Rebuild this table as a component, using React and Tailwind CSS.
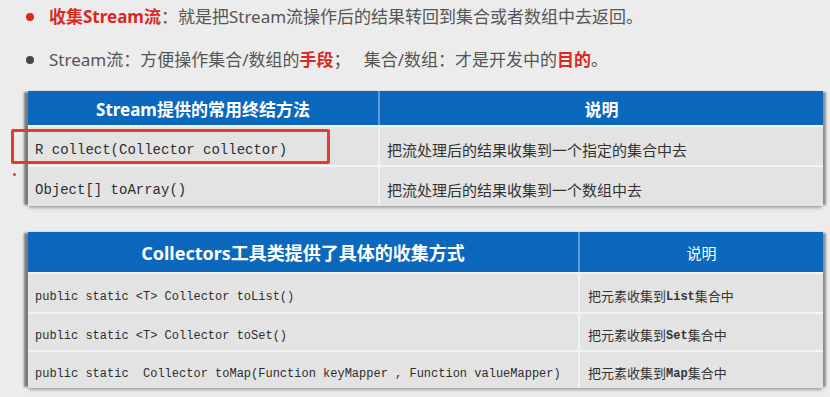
import React from 'react';

const sans = { fontFamily: '"Noto Sans", "Noto Sans CJK SC", sans-serif' };
const mono = { fontFamily: '"Liberation Mono", "Noto Sans CJK SC", monospace' };

const terminalMethods = [
  { sig: 'R collect(Collector collector)', desc: '把流处理后的结果收集到一个指定的集合中去', h: 'h-[40px]' },
  { sig: 'Object[] toArray()', desc: '把流处理后的结果收集到一个数组中去', h: 'h-[41px]' },
];

const collectors = [
  { sig: 'public static <T> Collector toList()', pre: '把元素收集到', kw: 'List', post: '集合中', h: 'h-[40px]' },
  { sig: 'public static <T> Collector toSet()', pre: '把元素收集到', kw: 'Set', post: '集合中', h: 'h-[38px]' },
  { sig: 'public static  Collector toMap(Function keyMapper , Function valueMapper)', pre: '把元素收集到', kw: 'Map', post: '集合中', h: 'h-[38px]' },
];

function Bullet({ color, children }) {
  return (
    <div className="flex items-center h-[34px]">
      <span className={`ml-[26px] w-[8px] h-[8px] rounded-full ${color}`} />
      <span className="ml-[15px] text-[17px] text-[#555]" style={sans}>{children}</span>
    </div>
  );
}

export default function App() {
  return (
    <div className="w-[830px] h-[397px] bg-[#ececec] overflow-hidden relative" style={sans}>
      <Bullet color="bg-[#d8281f]">
        <span className="font-bold text-[#d8281f]">收集Stream流</span>：就是把Stream流操作后的结果转回到集合或者数组中去返回。
      </Bullet>
      <div className="mt-[9px]">
        <Bullet color="bg-[#454545]">
          Stream流：方便操作集合/数组的<span className="font-bold text-[#d8281f]">手段</span>；&nbsp;&nbsp; 集合/数组：才是开发中的<span className="font-bold text-[#d8281f]">目的</span>。
        </Bullet>
      </div>

      {/* table 1 */}
      <div className="relative mt-[14px] ml-[28px] w-[795px] shadow-[-5px_0_2px_-1px_#7a7a7a,4px_0_2px_-1px_#8e8e8e,0_3px_3px_-1px_#a5a5a5]">
        <div className="grid grid-cols-[350px_1fr] h-[34px] bg-[#0b68bd] text-white font-bold text-[17px]">
          <div className="flex items-center justify-center pt-[3px]">Stream提供的常用终结方法</div>
          <div className="flex items-center justify-center pt-[3px] border-l-2 border-[#5c9bd6]">说明</div>
        </div>
        {terminalMethods.map((r) => (
          <div key={r.sig} className={`grid grid-cols-[350px_1fr] ${r.h} bg-[#e3e3e3] border-t-2 border-[#f3f3f3]`}>
            <div className="flex items-center pt-[8px] pl-[7px] text-[14px] text-[#2e2e2e]" style={mono}>{r.sig}</div>
            <div className="flex items-center pt-[8px] pl-[7px] text-[15px] text-[#333] border-l-2 border-[#f3f3f3]">{r.desc}</div>
          </div>
        ))}
        <div className="absolute left-[-17px] top-[38px] w-[319px] h-[35px] border-[3px] border-[#e8392c] rounded-[2px]" />
        <div className="absolute left-[-15px] top-[82px] w-[3px] h-[3px] rounded-full bg-[#e8392c]" />
      </div>

      {/* table 2 */}
      <div className="mt-[26px] ml-[28px] w-[795px] shadow-[-5px_0_2px_-1px_#7a7a7a,4px_0_2px_-1px_#8e8e8e,0_3px_3px_-1px_#a5a5a5]">
        <div className="grid grid-cols-[550px_1fr] h-[40px] bg-[#0b68bd] text-white">
          <div className="flex items-center justify-center pt-[2px] font-bold text-[18px]">Collectors工具类提供了具体的收集方式</div>
          <div className="flex items-center justify-center pt-[2px] text-[15px] border-l-2 border-[#5c9bd6]">说明</div>
        </div>
        {collectors.map((r) => (
          <div key={r.sig} className={`grid grid-cols-[550px_1fr] ${r.h} bg-[#e3e3e3] border-t-2 border-[#f3f3f3]`}>
            <div className="flex items-center pt-[8px] pl-[7px] text-[12px] text-[#2e2e2e] whitespace-pre" style={mono}>{r.sig}</div>
            <div className="flex items-center pt-[8px] pl-[8px] text-[13px] text-[#333] border-l-2 border-[#f3f3f3]">
              {r.pre}<span className="font-bold text-[12px]" style={mono}>{r.kw}</span>{r.post}
            </div>
          </div>
        ))}
      </div>
    </div>
  );
}
